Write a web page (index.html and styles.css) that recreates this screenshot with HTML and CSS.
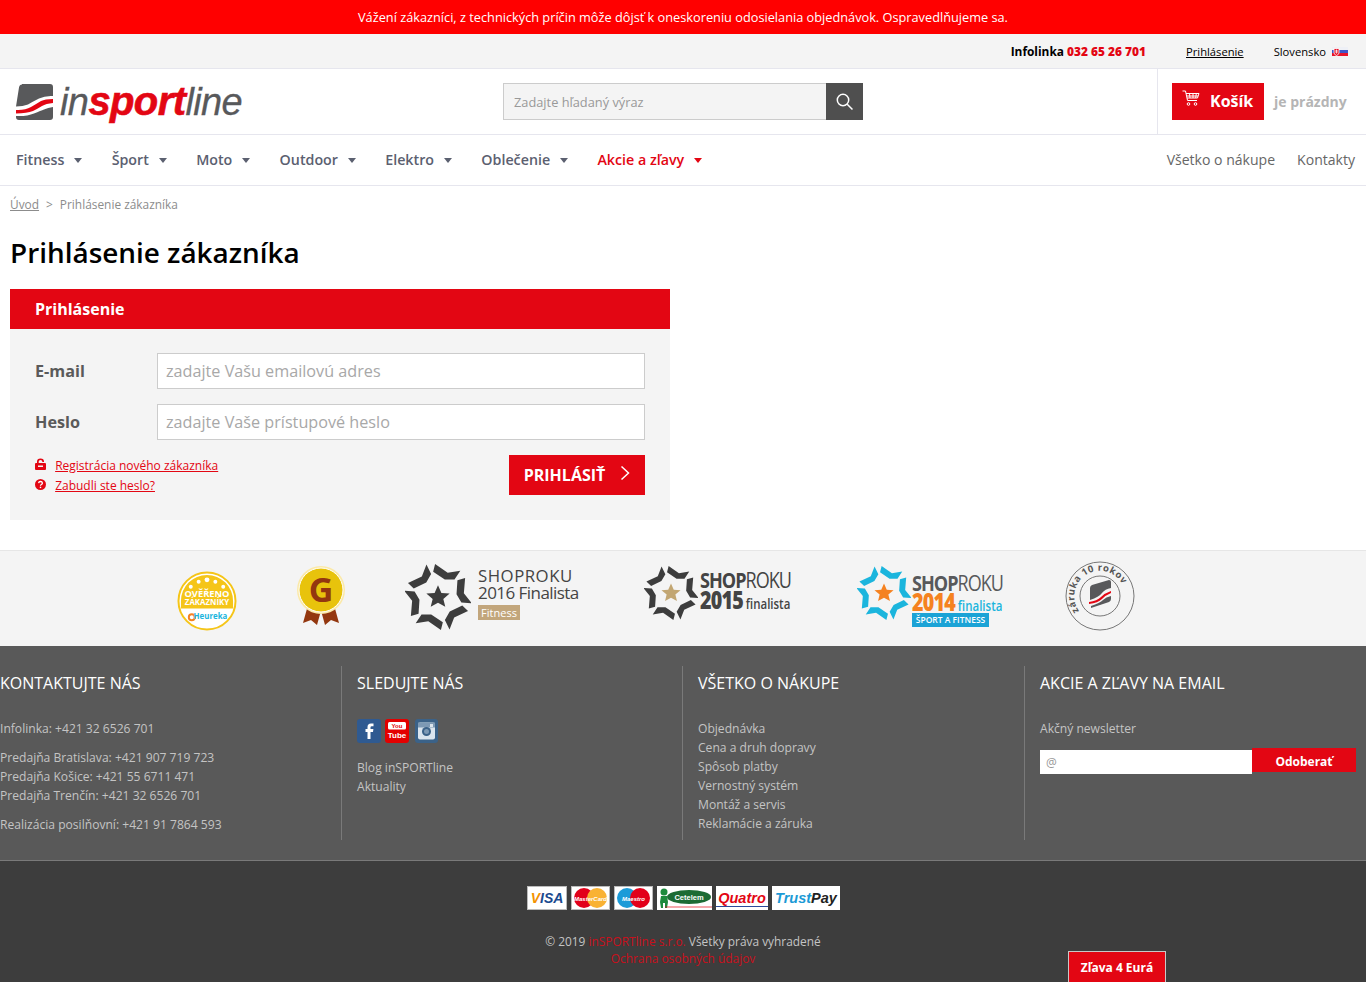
FILE: index.html
```html
<!DOCTYPE html>
<html lang="sk">
<head>
    <meta charset="UTF-8">
    <meta name="viewport" content="width=device-width, initial-scale=1.0">
    <title>Prihlásenie zákazníka</title>
    <link rel="stylesheet" href="styles.css">
</head>
<body>

<div class="alert">Vážení zákazníci, z technických príčin môže dôjsť k oneskoreniu odosielania objednávok. Ospravedlňujeme sa.</div>

<div class="topbar">
    <span class="infoline">Infolinka <b>032 65 26 701</b></span>
    <a class="top-login" href="#">Prihlásenie</a>
    <span class="country">Slovensko
        <svg class="flag" width="16" height="9" viewBox="0 0 16 9">
            <rect width="16" height="3" fill="#eef0f6"/>
            <rect y="3" width="16" height="3" fill="#3f55c8"/>
            <rect y="6" width="16" height="3" fill="#e8142a"/>
            <path d="M2 1.500h5v4.500q-.2 1.600-2.500 2.500q-2.300-.9-2.500-2.500z" fill="#e8142a" stroke="#fff" stroke-width=".8"/>
            <path d="M4.500 2.500v4M3.400 3.700h2.200M3.100 5h2.800" stroke="#fff" stroke-width=".7"/>
        </svg>
    </span>
</div>

<header class="header">
    <a class="logo" href="#">
        <svg width="37" height="36" viewBox="0 0 37 36">
            <path d="M6 0h28q3 0 3 3v9q-8-.5-14 2.500t-11 6q-5 2-12 2l3-19q.5-3 3-3z" fill="#58595b"/>
            <path d="M0 26q9 .5 15-3t10-6q4-2 12-2v4q-7 .5-11 3t-9 5q-6 2-17 2.500z" fill="#e30613"/>
            <path d="M37 23v10q0 3-3 3h-31q-3 0-3-3v-1q11 .5 18-2.500t10-4q4-2 9-2.500z" fill="#58595b"/>
        </svg>
        <span class="logo-text">in<b>sport</b>line</span>
    </a>
    <form class="search">
        <input type="text" placeholder="Zadajte hľadaný výraz">
        <button type="button" aria-label="Hľadať">
            <svg width="18" height="18" viewBox="0 0 18 18" fill="none" stroke="#fff" stroke-width="1.500"><circle cx="7" cy="7" r="5.700"/><path d="M11.200 11.200l5.300 5.300"/></svg>
        </button>
    </form>
    <div class="cart">
        <a class="cart-button" href="#">
            <svg width="18" height="17" viewBox="0 0 18 17" fill="none" stroke="#fff" stroke-width="1"><path d="M.5 1h3l2 9.500h9.500M4 3.500h13l-1.500 4.500h-10.500M5 6h11M7.500 3.500l.5 4.500M11 3.500v4.500M14.300 3.500l-.6 4.500"/><circle cx="6.500" cy="14" r="1.300"/><circle cx="13.500" cy="14" r="1.300"/></svg>
            Košík
        </a>
        <span class="cart-empty">je prázdny</span>
    </div>
</header>

<nav class="nav">
    <ul class="nav-main">
        <li>Fitness</li>
        <li>Šport</li>
        <li>Moto</li>
        <li>Outdoor</li>
        <li>Elektro</li>
        <li>Oblečenie</li>
        <li class="nav-sale">Akcie a zľavy</li>
    </ul>
    <ul class="nav-side">
        <li>Všetko o nákupe</li>
        <li>Kontakty</li>
    </ul>
</nav>

<main class="content">
    <div class="breadcrumb"><a href="#">Úvod</a><span class="sep">&gt;</span>Prihlásenie zákazníka</div>
    <h1>Prihlásenie zákazníka</h1>

    <section class="login">
        <h2>Prihlásenie</h2>
        <form class="login-body">
            <div class="field">
                <label>E-mail</label>
                <input type="text" placeholder="zadajte Vašu emailovú adres">
            </div>
            <div class="field">
                <label>Heslo</label>
                <input type="password" placeholder="zadajte Vaše prístupové heslo">
            </div>
            <div class="login-foot">
                <div class="login-links">
                    <div>
                        <svg width="11" height="12" viewBox="0 0 11 12"><path d="M2 6V3.500a3.500 3 0 0 1 7 0V4H7.300v-.5a1.800 1.500 0 0 0-3.600 0V6z" fill="#e30613"/><rect y="5" width="11" height="7" rx="1" fill="#e30613"/><rect x="3" y="7.500" width="5" height="1.500" fill="#f4f4f4"/></svg>
                        <a href="#">Registrácia nového zákazníka</a>
                    </div>
                    <div>
                        <svg width="11" height="11" viewBox="0 0 11 11"><circle cx="5.500" cy="5.500" r="5.500" fill="#e30613"/><path d="M3.600 4.200q.2-1.700 1.900-1.700t1.900 1.500q0 .9-1 1.500-.9.500-.9 1.200" fill="none" stroke="#fff" stroke-width="1.300"/><rect x="4.800" y="7.700" width="1.400" height="1.400" fill="#fff"/></svg>
                        <a href="#">Zabudli ste heslo?</a>
                    </div>
                </div>
                <button class="login-submit" type="button">
                    PRIHLÁSIŤ
                    <svg width="10" height="16" viewBox="0 0 10 16" fill="none" stroke="#fff" stroke-width="1.500"><path d="M1.500 1.500l7 6.500-7 6.500"/></svg>
                </button>
            </div>
        </form>
    </section>
</main>

<section class="awards">
    <svg class="award award-heureka" width="60" height="60" viewBox="0 0 61 61">
        <circle cx="30.500" cy="30.500" r="29" fill="#fff" stroke="#f5c518" stroke-width="2"/>
        <path d="M4 38V30.500a26.500 26.500 0 0 1 53 0V38z" fill="#f5c518"/>
        <g fill="#fff"><circle cx="14" cy="16" r="2"/><circle cx="22" cy="11" r="2"/><circle cx="30.500" cy="9" r="2.500"/><circle cx="39" cy="11" r="2"/><circle cx="47" cy="16" r="2"/></g>
        <text x="30.500" y="26" class="award-over">OVĚŘENO</text>
        <text x="30.500" y="35" class="award-zak">ZÁKAZNÍKY</text>
        <circle cx="15" cy="47" r="3" fill="none" stroke="#f58220" stroke-width="2"/>
        <text x="34" y="49" class="award-heu">Heureka</text>
    </svg>

    <svg class="award award-gold" width="52" height="62" viewBox="0 0 52 62">
        <path d="M13 40L8 58l8-3 6 5 5-18zM39 40l5 18-8-3-6 5-5-18z" fill="#93370f"/>
        <circle cx="26" cy="25" r="24" fill="#fbe9a8"/>
        <circle cx="26" cy="25" r="22" fill="#e8c30c" stroke="#fff" stroke-width="1"/>
        <text x="26" y="37" class="award-g">G</text>
    </svg>

    <div class="award shop shop-2016">
        <svg width="66" height="68" viewBox="-34 -35 68 70" fill="#3d3d3d">
            <path id="piece16" d="M-3-34L10-25 23-27 17-18 7-18-5-26z"/>
            <use href="#piece16" transform="rotate(60)"/><use href="#piece16" transform="rotate(120)"/><use href="#piece16" transform="rotate(180)"/><use href="#piece16" transform="rotate(240)"/><use href="#piece16" transform="rotate(300)"/>
            <path d="M0-12L3.500-4 12-3.500 5.500 2 7.500 10 0 6-7.500 10-5.500 2-12-3.500-3.500-4z"/>
        </svg>
        <div class="shop16">
            <div class="shop16-name">SHOPROKU</div>
            <div class="shop16-year">2016 Finalista</div>
            <span class="shop16-tag">Fitness</span>
        </div>
    </div>

    <div class="award shop shop-2015">
        <svg width="54" height="56" viewBox="-34 -35 68 70" fill="#3d3d3d">
            <path id="piece15" d="M-3-34L10-25 23-27 17-18 7-18-5-26z"/>
            <use href="#piece15" transform="rotate(60)"/><use href="#piece15" transform="rotate(120)"/><use href="#piece15" transform="rotate(180)"/><use href="#piece15" transform="rotate(240)"/><use href="#piece15" transform="rotate(300)"/>
            <path d="M0-12L3.500-4 12-3.500 5.500 2 7.500 10 0 6-7.500 10-5.500 2-12-3.500-3.500-4z" fill="#c2a672"/>
        </svg>
        <div class="shop15">
            <div class="shop-name"><b>SHOP</b>ROKU</div>
            <div class="shop-year"><b>2015</b> finalista</div>
        </div>
    </div>

    <div class="award shop shop-2014">
        <svg width="54" height="56" viewBox="-34 -35 68 70" fill="#1bb5dd">
            <path id="piece14" d="M-3-34L10-25 23-27 17-18 7-18-5-26z"/>
            <use href="#piece14" transform="rotate(60)"/><use href="#piece14" transform="rotate(120)"/><use href="#piece14" transform="rotate(180)"/><use href="#piece14" transform="rotate(240)"/><use href="#piece14" transform="rotate(300)"/>
            <path d="M0-12L3.500-4 12-3.500 5.500 2 7.500 10 0 6-7.500 10-5.500 2-12-3.500-3.500-4z" fill="#f58220"/>
        </svg>
        <div class="shop14">
            <div class="shop-name"><b>SHOP</b>ROKU</div>
            <div class="shop-year"><b>2014</b> <span>finalista</span></div>
            <div class="shop14-tag">ŠPORT A FITNESS</div>
        </div>
    </div>

    <svg class="award award-ten" width="70" height="70" viewBox="0 0 70 70">
        <circle cx="35" cy="35" r="34" fill="none" stroke="#777" stroke-width="1"/>
        <circle cx="35" cy="35" r="20" fill="none" stroke="#777" stroke-width="1"/>
        <path id="arc10" d="M14 50A25.500 25.500 0 1 1 58 46" fill="none"/>
        <text class="award-10"><textPath href="#arc10">záruka 10 rokov</textPath></text>
        <path d="M25 27q0-2 2-3l17-5q2 0 2 2v6q-6 1-9 5t-12 7z" fill="#58595b"/>
        <path d="M24 41q8-1 12-5t10-6v2q-5 2-9 6t-13 5z" fill="#e30613"/>
        <path d="M26 47l18-6q2-1 2-3v-3q-5 1-8 4t-12 6z" fill="#58595b"/>
    </svg>
</section>

<footer class="footer">
    <div class="footer-cols">
        <div class="footer-col">
            <h3>Kontaktujte nás</h3>
            <p>Infolinka: +421 32 6526 701</p>
            <p>Predajňa Bratislava: +421 907 719 723<br>Predajňa Košice: +421 55 6711 471<br>Predajňa Trenčín: +421 32 6526 701</p>
            <p>Realizácia posilňovní: +421 91 7864 593</p>
        </div>
        <div class="footer-col">
            <h3>Sledujte nás</h3>
            <div class="social">
                <svg width="24" height="24" viewBox="0 0 24 24"><rect width="24" height="24" rx="3" fill="#2f5a91"/><path d="M13.500 20v-7h2.500l.4-3h-2.900V8.500q0-1.300 1.300-1.300h1.700V4.400h-2.500q-3.500 0-3.500 3.500V10H8.500v3h2v7z" fill="#fff"/></svg>
                <svg width="24" height="24" viewBox="0 0 24 24"><rect width="24" height="24" rx="3" fill="#e30000"/><rect x="3" y="3" width="18" height="7.500" rx="1.500" fill="#fff"/><text x="12" y="9" class="yt-you">You</text><text x="12" y="19" class="yt-tube">Tube</text></svg>
                <svg class="social-insta" width="23" height="24" viewBox="0 0 23 24"><rect width="23" height="24" rx="3" fill="#3b6288"/><rect x="3" y="3.500" width="17" height="17" rx="2" fill="#dbe5ee"/><rect x="3" y="3.500" width="17" height="5" fill="#7d99b4"/><circle cx="11.500" cy="12.500" r="4.500" fill="#3b6288"/><circle cx="11.500" cy="12.500" r="2.500" fill="#7d99b4"/><rect x="15" y="5" width="3" height="3" fill="#dbe5ee"/></svg>
            </div>
            <ul>
                <li>Blog inSPORTline</li>
                <li>Aktuality</li>
            </ul>
        </div>
        <div class="footer-col">
            <h3>Všetko o nákupe</h3>
            <ul class="footer-list">
                <li>Objednávka</li>
                <li>Cena a druh dopravy</li>
                <li>Spôsob platby</li>
                <li>Vernostný systém</li>
                <li>Montáž a servis</li>
                <li>Reklamácie a záruka</li>
            </ul>
        </div>
        <div class="footer-col">
            <h3>Akcie a zľavy na email</h3>
            <p>Akčný newsletter</p>
            <form class="newsletter">
                <input type="text" placeholder="@">
                <button type="button">Odoberať</button>
            </form>
        </div>
    </div>
</footer>

<div class="bottom">
    <div class="cards">
        <span class="card card-visa"><span>VISA</span></span>
        <span class="card card-circles">
            <svg width="37" height="22" viewBox="0 0 37 22"><circle cx="12" cy="11" r="10" fill="#e2001a"/><circle cx="25" cy="11" r="10" fill="#f9b233"/><text x="18.500" y="13.500" class="card-small">MasterCard</text></svg>
        </span>
        <span class="card card-circles">
            <svg width="37" height="22" viewBox="0 0 37 22"><circle cx="12" cy="11" r="10" fill="#1c9bd8"/><circle cx="25" cy="11" r="10" fill="#e2001a"/><text x="18.500" y="13.500" class="card-small">Maestro</text></svg>
        </span>
        <span class="card card-cetelem">
            <svg width="55" height="24" viewBox="0 0 55 24"><ellipse cx="32" cy="11" rx="22" ry="7" fill="#1d6b34"/><circle cx="7" cy="6" r="3.500" fill="#1d8a3c"/><path d="M4 10h6l1 6-1 6H8v-5H6v5H4l-1-6z" fill="#1d8a3c"/><path d="M8 21h47" stroke="#e30613" stroke-width=".7"/><text x="32" y="13.500" class="card-cet">Cetelem</text></svg>
        </span>
        <span class="card card-quatro">Quatro</span>
        <span class="card card-trust"><i>Trust</i><b>Pay</b></span>
    </div>
    <div class="copy">© 2019 <a href="#">inSPORTline s.r.o.</a> Všetky práva vyhradené</div>
    <div class="copy"><a href="#">Ochrana osobných údajov</a></div>
</div>

<a class="discount" href="#">Zľava 4 Eurá</a>

</body>
</html>
```

FILE: styles.css
```css
* { box-sizing: border-box; }
html, body { margin: 0; padding: 0; }
body { font-family: "Open Sans", Arial, sans-serif; font-size: 13px; color: #000; background: #fff; height: 982px; overflow: hidden; position: relative; }
a { color: inherit; }
ul { list-style: none; margin: 0; padding: 0; }

.alert { height: 34px; background: #f00; color: #fff; text-align: center; line-height: 34px; font-size: 12.750px; }

.topbar { height: 35px; background: #f4f4f4; border-bottom: 1px solid #e6e6ee; display: flex; justify-content: flex-end; align-items: center; padding-right: 18px; font-size: 11.200px; }
.infoline { font-size: 11.900px; font-weight: 700; margin-right: 40px; }
.infoline b { color: #e30613; }
.top-login { margin-right: 30px; }
.country { display: flex; align-items: center; gap: 6px; }

.header { height: 66px; border-bottom: 1px solid #e6e6ee; display: flex; position: relative; }
.logo { display: flex; align-items: center; width: 503px; padding-left: 16px; text-decoration: none; }
.logo-text { font-family: "Liberation Sans", Arial, sans-serif; font-style: italic; font-size: 38px; color: #58595b; letter-spacing: -.6px; margin-left: 7px; -webkit-text-stroke: .3px #58595b; }
.logo-text b { color: #e30613; font-size: 40px; font-weight: 700; letter-spacing: -.6px; -webkit-text-stroke: .6px #e30613; }
.search { display: flex; width: 360px; height: 37px; margin-top: 14px; }
.search input { flex: 1; border: 1px solid #ccc; border-right: none; background: #f4f4f4; padding: 0 10px; font: 12.800px "Open Sans", Arial, sans-serif; }
.search input::placeholder { color: #999; opacity: 1; }
.search button { width: 37px; border: none; background: #4f4f4f; padding: 0; display: flex; align-items: center; justify-content: center; }
.cart { margin-left: auto; width: 209px; border-left: 1px solid #e6e6ee; display: flex; align-items: center; padding-left: 14px; }
.cart-button { height: 37px; width: 92px; margin-top: -1px; background: #e30613; color: #fff; font-size: 16px; font-weight: 700; text-decoration: none; display: flex; align-items: center; padding-left: 10px; gap: 10px; }
.cart-button svg { margin-top: -5px; }
.cart-empty { margin-left: 10px; font-size: 14px; font-weight: 700; color: #b5b5b5; }

.nav { height: 51px; border-bottom: 1px solid #e6e6ee; display: flex; justify-content: space-between; align-items: center; padding: 0 11px 2px 16px; font-size: 14.250px; color: #5b6070; }
.nav-main { display: flex; gap: 29.300px; font-weight: 600; }
.nav-main li { display: flex; align-items: center; gap: 10px; }
.nav-main li::after { content: ""; border: 4px solid transparent; border-top: 5px solid #5b6070; border-bottom: none; margin-top: 2px; }
.nav-main .nav-sale { color: #e30613; }
.nav-main .nav-sale::after { border-top-color: #e30613; }
.nav-side { display: flex; gap: 22px; color: #666; font-size: 14.050px; }

.content { padding: 0 10px; height: 364px; }
.breadcrumb { font-size: 11.900px; color: #8c8c8c; padding-top: 10px; height: 33px; }
.sep { margin: 0 7px; }
h1 { font-size: 27.900px; font-weight: 600; line-height: 36px; margin: 15px 0 19px; }
.login { width: 660px; }
.login h2 { margin: 0; height: 40px; background: #e30613; color: #fff; font-size: 16px; font-weight: 700; line-height: 40px; padding-left: 25px; }
.login-body { background: #f4f4f4; height: 191px; padding: 24px 25px 0; }
.field { display: flex; align-items: center; margin-bottom: 15px; }
.field label { width: 122px; font-size: 16.200px; font-weight: 700; color: #5a5a5a; }
.field input { width: 488px; height: 36px; border: 1px solid #ccc; background: #fff; padding: 0 8px; font: 16.200px "Open Sans", Arial, sans-serif; }
.field input::placeholder { color: #a8a8a8; opacity: 1; }
.login-foot { display: flex; justify-content: space-between; }
.login-links { font-size: 12px; line-height: 20px; color: #e30613; padding-top: 1px; }
.login-links a { margin-left: 6px; }
.login-links svg { vertical-align: 0; }
.login-submit { width: 136px; height: 40px; background: #e30613; border: none; color: #fff; font: 700 16px "Open Sans", Arial, sans-serif; display: flex; align-items: center; justify-content: center; gap: 15px; }
.login-submit svg { margin-top: -4px; }

.awards { position: relative; height: 96px; background: #f4f4f4; border-top: 1px solid #e6e6e6; }
.award { position: absolute; }
.award-heureka { left: 177px; top: 20px; }
.award-gold { left: 295px; top: 14px; }
.award-ten { left: 1065px; top: 10px; }
.shop { display: flex; align-items: flex-start; }
.shop-2016 { left: 405px; top: 12px; }
.shop-2015 { left: 644px; top: 14px; }
.shop-2014 { left: 857px; top: 14px; }
.award-over, .award-zak { font: 700 9.500px "Open Sans", sans-serif; fill: #fff; text-anchor: middle; }
.award-zak { font-size: 8px; }
.award-heu { font: 700 8px "Open Sans", sans-serif; fill: #1bb5dd; text-anchor: middle; }
.award-g { font: 700 34px "Open Sans", sans-serif; fill: #93370f; text-anchor: middle; }
.award-10 { font: 700 9.500px "Open Sans", sans-serif; fill: #555; letter-spacing: .5px; }
.shop16 { margin: 4px 0 0 7px; color: #444; }
.shop16-name { font-size: 16.800px; line-height: 17px; letter-spacing: .5px; }
.shop16-year { font-size: 17px; line-height: 17px; letter-spacing: -.55px; }
.shop16-tag { display: block; width: 42px; margin-top: 4px; background: #c2a67c; color: #fff; font-size: 11px; line-height: 15px; text-align: center; }
.shop-name, .shop-year { white-space: nowrap; transform: scaleX(.82); transform-origin: left center; height: 20px; line-height: 20px; }
.shop-name { font-size: 22px; letter-spacing: -1.200px; }
.shop-year { font-size: 14px; font-weight: 600; }
.shop-year b { font-size: 24px; letter-spacing: -1px; }
.shop15 { margin: 4px 0 0 2px; color: #444; }
.shop15 .shop-name { height: 21px; }
.shop14 { margin: 7px 0 0 1px; color: #58595b; }
.shop14 .shop-year { color: #1bb5dd; }
.shop14 .shop-year b { color: #f58220; }
.shop14-tag { background: #1ba3d6; color: #fff; font-size: 8.500px; font-weight: 600; line-height: 14px; text-align: center; width: 77px; margin-top: 1px; }

.footer { height: 215px; background: #595959; border-bottom: 1px solid #7a7a7a; padding-top: 20px; color: #c4c4c4; font-size: 12.100px; }
.footer-cols { display: grid; grid-template-columns: 342px 341px 342px 1fr; height: 174px; line-height: 19px; }
.footer-col { padding-left: 15px; border-right: 1px solid #7a7a7a; }
.footer-col:first-child { padding-left: 0; }
.footer-col:last-child { border-right: none; }
.footer h3 { margin: 0 0 19px; color: #fff; font-size: 16px; font-weight: 400; text-transform: uppercase; line-height: 34px; }
.footer p { margin: 0 0 10px; }
.footer p:last-child { margin-bottom: 0; }
.social { display: flex; gap: 4px; margin: 1px 0 15px; height: 24px; }
.social-insta { margin-left: 2px; }
.newsletter { display: flex; align-items: flex-start; margin-top: 10px; height: 26px; width: 316px; }
.newsletter input { width: 212px; height: 24px; margin-top: 2px; border: none; padding: 0 6px; font: 12px "Open Sans", Arial, sans-serif; }
.newsletter input::placeholder { color: #999; opacity: 1; }
.newsletter button { width: 104px; height: 24px; border: none; background: #e30613; color: #fff; font: 700 12px "Open Sans", Arial, sans-serif; padding: 2px 0 0; }

.bottom { height: 121px; background: #3d3d3d; padding-top: 25px; text-align: center; color: #c4c4c4; font-size: 11.900px; }
.cards { display: flex; justify-content: center; gap: 4px; height: 24px; margin: 0 0 23px; padding-left: 1px; }
.card { display: flex; align-items: center; justify-content: center; height: 24px; background: #fff; }
.card-visa { width: 40px; color: #1a4a8f; font: italic 700 14px "Liberation Sans", Arial, sans-serif; border: 1px solid #bbb; }
.card-visa span::first-letter { color: #f39200; }
.card-visa span { display: inline-block; }
.card-circles { width: 39px; border: 1px solid #bbb; overflow: hidden; }
.card-small { font: italic 700 6px "Liberation Sans", Arial, sans-serif; fill: #fff; text-anchor: middle; }
.card-cetelem { width: 55px; }
.card-cet { font: 700 7.500px "Liberation Sans", Arial, sans-serif; fill: #fff; text-anchor: middle; }
.card-quatro { width: 52px; color: #e30613; font: italic 700 14.500px "Liberation Sans", Arial, sans-serif; box-shadow: inset 0 -3px 0 #fff, inset 0 -4px 0 #2b4a9b; }
.card-trust { width: 68px; font: 14.500px "Liberation Sans", Arial, sans-serif; }
.card-trust i { color: #1b9ad6; font-weight: 700; }
.card-trust b { font-style: italic; font-weight: 700; color: #222; }
.copy { line-height: 17px; }
.copy a { color: #c8101c; text-decoration: none; }

.discount { position: absolute; left: 1068px; top: 951px; width: 98px; height: 31px; background: #e30613; color: #fff; font-size: 12px; font-weight: 700; line-height: 31px; text-align: center; text-decoration: none; border: 1px solid #c8c8c8; border-bottom: none; }

.yt-you { font: 700 6px "Liberation Sans", sans-serif; fill: #e30000; text-anchor: middle; }
.yt-tube { font: 700 8px "Liberation Sans", sans-serif; fill: #fff; text-anchor: middle; }
```
